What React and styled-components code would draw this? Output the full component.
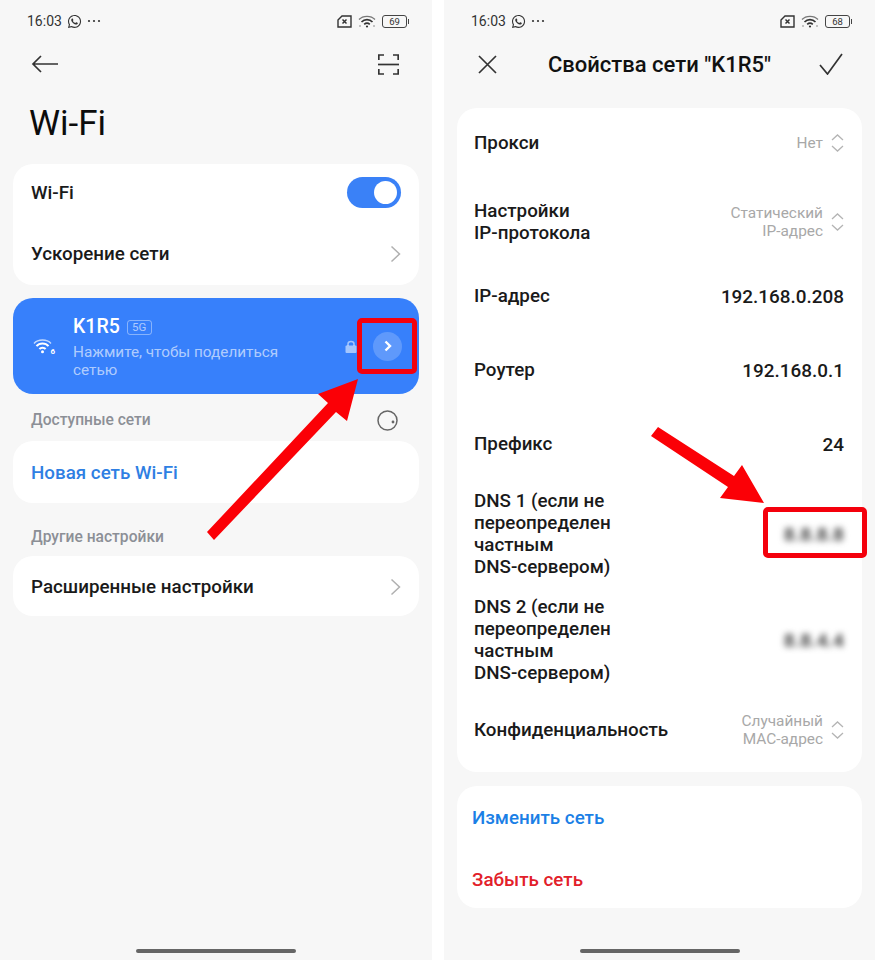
import React from "react";
import styled, { createGlobalStyle } from "styled-components";
import { FaWhatsapp } from "react-icons/fa";

const Global = createGlobalStyle`
  html, body {
    margin: 0;
    background: #ffffff;
  }
  body {
    font-family: Roboto, "Noto Sans", sans-serif;
    color: #111;
  }
`;

const Page = styled.div`
  position: relative;
  display: flex;
  gap: 12px;
  width: 875px;
  height: 960px;
  overflow: hidden;
`;

const Phone = styled.section`
  display: flex;
  flex-direction: column;
  width: ${(p) => p.$width}px;
  height: 960px;
  background: #f7f7f7;
  box-sizing: border-box;
  padding: 0 13px;
`;

const StatusBar = styled.div`
  display: flex;
  align-items: center;
  justify-content: space-between;
  height: 42px;
  padding: 0 12px 0 14px;
  font-size: 14px;
  color: #333;
`;

const StatusGroup = styled.div`
  display: flex;
  align-items: center;
  gap: ${(p) => p.$gap || 5}px;
`;

const Battery = styled.div`
  position: relative;
  width: 23px;
  height: 11px;
  border: 1px solid #444;
  border-radius: 3px;
  font-size: 9.5px;
  line-height: 11px;
  text-align: center;
  color: #333;
  &::after {
    content: "";
    position: absolute;
    right: -3px;
    top: 3px;
    width: 1.5px;
    height: 5px;
    background: #444;
  }
`;

const NavBar = styled.div`
  display: flex;
  align-items: center;
  justify-content: space-between;
  height: 44px;
  padding: ${(p) => p.$padding};
`;

const Title = styled.h1`
  margin: 0;
  height: 78px;
  padding-left: 16px;
  font-size: 35px;
  font-weight: 400;
  line-height: 76px;
  color: #0c0c0c;
`;

const NavTitle = styled.div`
  margin-left: 3px;
  font-size: 22px;
  font-weight: 500;
  color: #111;
`;

const Card = styled.div`
  background: #fff;
  border-radius: 20px;
  margin-top: ${(p) => p.$before || 0}px;
  padding-bottom: ${(p) => p.$bottom || 0}px;
`;

const Row = styled.div`
  display: flex;
  align-items: center;
  justify-content: space-between;
  box-sizing: border-box;
  height: ${(p) => p.$height}px;
  margin-top: ${(p) => p.$offset || 0}px;
  padding: ${(p) => p.$nudge || 0}px 18px 0 ${(p) => p.$left || 18}px;
`;

const Label = styled.div`
  font-size: 18.8px;
  font-weight: 500;
  line-height: 22px;
  color: ${(p) => p.$color || "#1a1a1a"};
`;

const Value = styled.div`
  font-size: 18.9px;
  font-weight: 500;
  color: #1a1a1a;
`;

const Blurred = styled.div`
  font-size: 19px;
  font-weight: 700;
  color: #444;
  filter: blur(3px);
`;

const Picker = styled.div`
  display: flex;
  align-items: center;
  gap: 8px;
  font-size: 15.4px;
  line-height: 18px;
  text-align: right;
  color: #a8a8a8;
`;

const Toggle = styled.div`
  display: flex;
  justify-content: flex-end;
  align-items: center;
  box-sizing: border-box;
  width: 54px;
  height: 31px;
  padding: 0 4px;
  border-radius: 16px;
  background: #3a81f7;
  &::after {
    content: "";
    width: 23px;
    height: 23px;
    border-radius: 50%;
    background: #fff;
  }
`;

const ActiveNetwork = styled.div`
  display: flex;
  align-items: center;
  box-sizing: border-box;
  height: 96px;
  margin-top: 13px;
  padding: 0 17px 0 20px;
  border-radius: 20px;
  background: #3780fb;
  color: #fff;
`;

const NetworkText = styled.div`
  flex: 1;
  margin-left: 17px;
  padding-top: 3px;
`;

const NetworkName = styled.div`
  display: flex;
  align-items: center;
  gap: 7px;
  font-size: 19.5px;
  font-weight: 500;
  line-height: 22px;
`;

const Badge = styled.span`
  box-sizing: border-box;
  width: 25px;
  height: 15px;
  border: 1px solid rgba(255, 255, 255, 0.4);
  border-radius: 3px;
  font-size: 11.5px;
  font-weight: 400;
  line-height: 13px;
  text-align: center;
  color: rgba(255, 255, 255, 0.6);
`;

const NetworkHint = styled.div`
  width: 230px;
  margin-top: 5px;
  font-size: 15.3px;
  line-height: 18px;
  color: rgba(255, 255, 255, 0.62);
`;

const RoundButton = styled.div`
  display: flex;
  align-items: center;
  justify-content: center;
  width: 29px;
  height: 29px;
  margin-left: 16px;
  border-radius: 50%;
  background: rgba(255, 255, 255, 0.2);
`;

const Section = styled.div`
  display: flex;
  align-items: center;
  justify-content: space-between;
  box-sizing: border-box;
  height: ${(p) => p.$height}px;
  padding: ${(p) => p.$top}px 21px 0 18px;
  font-size: 15.6px;
  font-weight: 500;
  color: #8c8f96;
`;

const HomeBar = styled.div`
  align-self: center;
  width: ${(p) => p.$width}px;
  height: 4px;
  margin-top: auto;
  margin-bottom: 7px;
  border-radius: 2px;
  background: #666;
`;

// red annotations lying over the screens
const Overlay = styled.svg`
  position: absolute;
  inset: 0;
  pointer-events: none;
`;

const Marker = styled.div`
  position: absolute;
  left: ${(p) => p.$x}px;
  top: ${(p) => p.$y}px;
  width: ${(p) => p.$w}px;
  height: ${(p) => p.$h}px;
  box-sizing: border-box;
  border: 5px solid #f4000c;
  border-radius: 5px;
`;

const Line = ({ w, h, children, stroke = "#333", sw = 1.6 }) => (
  <svg width={w} height={h} viewBox={`0 0 ${w} ${h}`} fill="none" stroke={stroke} strokeWidth={sw}>
    {children}
  </svg>
);

const Chevron = () => (
  <Line w={11} h={18} stroke="#b0b0b0" sw={1.5}>
    <path d="M1.5 1.5 L9.5 9 L1.5 16.5" />
  </Line>
);

const UpDown = () => (
  <Line w={13} h={20} stroke="#b4b4b4" sw={1.3}>
    <path d="M1 7 L6.5 2 L12 7" />
    <path d="M1 13 L6.5 18 L12 13" />
  </Line>
);

const WifiStatus = () => (
  <svg width="18" height="13" viewBox="0 0 18 13" fill="none" stroke="#333">
    <path d="M1 4.5 C5 0.3 13 0.3 17 4.5" strokeWidth="1.2" opacity="0.65" />
    <path d="M3.5 7 C6.5 3.8 11.5 3.8 14.5 7" strokeWidth="1.7" />
    <path d="M6.2 9.4 C7.8 8 10.2 8 11.8 9.4" strokeWidth="1.7" />
    <circle cx="9" cy="11.5" r="1.1" fill="#333" stroke="none" />
    <circle cx="2" cy="11" r="0.8" fill="#333" stroke="none" opacity="0.6" />
    <circle cx="16" cy="11" r="0.8" fill="#333" stroke="none" opacity="0.6" />
  </svg>
);

const WifiActive = () => (
  <svg width="23" height="17" viewBox="0 0 23 17" fill="none" stroke="#fff">
    <path d="M1 5.5 C5 0.8 14 0.8 18 5.5" strokeWidth="1.3" opacity="0.7" />
    <path d="M3.5 8.2 C6.5 4.6 12.5 4.6 15.5 8.2" strokeWidth="2" />
    <path d="M6.4 11 C8 9.2 11 9.2 12.6 11" strokeWidth="2" />
    <circle cx="9.5" cy="13.8" r="1.5" fill="#fff" stroke="none" />
    <text x="17.5" y="16" fontSize="8" fontWeight="700" fill="#fff" stroke="none" fontFamily="Roboto, sans-serif">
      6
    </text>
  </svg>
);

const SimOff = () => (
  <Line w={15} h={13} stroke="#333" sw={1.4}>
    <path d="M1 5 L5 1 H14 V12 H1 Z" />
    <path d="M5.5 4.5 L9.5 8.5 M9.5 4.5 L5.5 8.5" strokeWidth="1.5" />
  </Line>
);

const Status = ({ level }) => (
  <StatusBar>
    <StatusGroup>
      <span>16:03</span>
      <FaWhatsapp size={15} color="#333" />
      <Line w={14} h={4} sw={0}>
        <circle cx="2" cy="2" r="1.1" fill="#333" />
        <circle cx="7" cy="2" r="1.1" fill="#333" />
        <circle cx="12" cy="2" r="1.1" fill="#333" />
      </Line>
    </StatusGroup>
    <StatusGroup $gap={6}>
      <SimOff />
      <WifiStatus />
      <Battery>{level}</Battery>
    </StatusGroup>
  </StatusBar>
);

export default function App() {
  return (
    <Page>
      <Global />
      <Phone $width={432}>
        <Status level="69" />
        <NavBar $padding="0 20px 0 18px">
          <Line w={27} h={20} sw={1.7}>
            <path d="M27 10 H2 M10 2 L2 10 L10 18" />
          </Line>
          <Line w={21} h={21} sw={1.7}>
            <path d="M0.8 6 V1 H6 M15 1 H20.2 V6 M0.8 15 V20 H6 M15 20 H20.2 V15" />
            <path d="M0 10.5 H21" />
          </Line>
        </NavBar>
        <Title>Wi-Fi</Title>
        <Card>
          <Row $height={57}>
            <Label>Wi-Fi</Label>
            <Toggle />
          </Row>
          <Row $height={64} $nudge={2}>
            <Label>Ускорение сети</Label>
            <Chevron />
          </Row>
        </Card>
        <ActiveNetwork>
          <WifiActive />
          <NetworkText>
            <NetworkName>
              K1R5 <Badge>5G</Badge>
            </NetworkName>
            <NetworkHint>Нажмите, чтобы поделиться сетью</NetworkHint>
          </NetworkText>
          <svg width="12" height="13" viewBox="0 0 12 13" fill="none">
            <path d="M3 6 V4 C3 0.8 9 0.8 9 4 V6" stroke="#ffffff" strokeOpacity="0.55" strokeWidth="1.5" />
            <rect x="0.5" y="5.5" width="11" height="7.5" rx="1" fill="#ffffff" fillOpacity="0.55" />
          </svg>
          <RoundButton>
            <Line w={8} h={12} stroke="#fff" sw={2.4}>
              <path d="M1.5 1.5 L6 6 L1.5 10.5" />
            </Line>
          </RoundButton>
        </ActiveNetwork>
        <Section $height={47} $top={5}>
          <span>Доступные сети</span>
          <Line w={21} h={21} stroke="#666" sw={1.5}>
            <circle cx="10.5" cy="10.5" r="9.5" />
            <circle cx="16" cy="12" r="1.4" fill="#666" stroke="none" />
          </Line>
        </Section>
        <Card>
          <Row $height={62} $nudge={2}>
            <Label $color="#2f7fe3">Новая сеть Wi-Fi</Label>
          </Row>
        </Card>
        <Section $height={53} $top={15}>
          <span>Другие настройки</span>
        </Section>
        <Card>
          <Row $height={60} $nudge={2}>
            <Label>Расширенные настройки</Label>
            <Chevron />
          </Row>
        </Card>
        <HomeBar $width={160} />
      </Phone>

      <Phone $width={431}>
        <Status level="68" />
        <NavBar $padding="0 19px 0 21px">
          <Line w={19} h={19} sw={1.7}>
            <path d="M1 1 L18 18 M18 1 L1 18" />
          </Line>
          <NavTitle>Свойства сети "K1R5"</NavTitle>
          <Line w={24} h={22} sw={1.7}>
            <path d="M1 12 L8.5 21 L23 1" />
          </Line>
        </NavBar>
        <Card $before={22} $bottom={6}>
          <Row $height={70} $left={17}>
            <Label>Прокси</Label>
            <Picker>
              Нет <UpDown />
            </Picker>
          </Row>
          <Row $height={74} $offset={7} $left={17}>
            <Label>
              Настройки
              <br />
              IP-протокола
            </Label>
            <Picker>
              <div>
                Статический
                <br />
                IP-адрес
              </div>
              <UpDown />
            </Picker>
          </Row>
          <Row $height={74} $left={17}>
            <Label>IP-адрес</Label>
            <Value>192.168.0.208</Value>
          </Row>
          <Row $height={74} $left={17}>
            <Label>Роутер</Label>
            <Value>192.168.0.1</Value>
          </Row>
          <Row $height={74} $left={17}>
            <Label>Префикс</Label>
            <Value>24</Value>
          </Row>
          <Row $height={106} $left={17}>
            <Label>
              DNS 1 (если не
              <br />
              переопределен
              <br />
              частным
              <br />
              DNS-сервером)
            </Label>
            <Blurred>8.8.8.8</Blurred>
          </Row>
          <Row $height={106} $left={17}>
            <Label>
              DNS 2 (если не
              <br />
              переопределен
              <br />
              частным
              <br />
              DNS-сервером)
            </Label>
            <Blurred>8.8.4.4</Blurred>
          </Row>
          <Row $height={73} $left={17}>
            <Label>Конфиденциальность</Label>
            <Picker>
              <div>
                Случайный
                <br />
                MAC-адрес
              </div>
              <UpDown />
            </Picker>
          </Row>
        </Card>
        <Card $before={14}>
          <Row $height={62} $left={15} $nudge={2}>
            <Label $color="#1b7fe6">Изменить сеть</Label>
          </Row>
          <Row $height={60} $left={15} $nudge={4}>
            <Label $color="#e2202a">Забыть сеть</Label>
          </Row>
        </Card>
        <HomeBar $width={160} />
      </Phone>

      <Overlay width="875" height="960" viewBox="0 0 875 960">
        <polygon points="207,532 328,403 318,394 358,379 347,421 336,412 214,540" fill="#fb0006" />
        <polygon points="651,436 658,427 734,476 742,465 764,503 720,498 728,487" fill="#fb0006" />
      </Overlay>
      <Marker $x={357} $y={318} $w={60} $h={56} />
      <Marker $x={763} $y={507} $w={104} $h={51} />
    </Page>
  );
}
